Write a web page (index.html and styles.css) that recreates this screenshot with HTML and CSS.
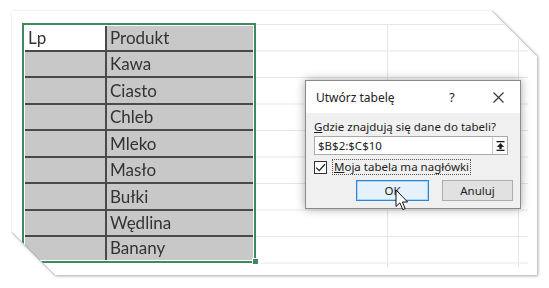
FILE: index.html
```html
<!DOCTYPE html>
<html lang="pl">
<head>
<meta charset="utf-8">
<title>Utwórz tabelę</title>
<link rel="stylesheet" href="styles.css">
</head>
<body>
<div class="page">
  <div class="sheet">
    <div class="paper">
      <div class="ws">
        <div class="tbl">
          <div class="rows">
            <div class="c lp">Lp</div><div class="c">Produkt</div>
            <div class="c"></div><div class="c">Kawa</div>
            <div class="c"></div><div class="c">Ciasto</div>
            <div class="c"></div><div class="c">Chleb</div>
            <div class="c"></div><div class="c">Mleko</div>
            <div class="c"></div><div class="c">Masło</div>
            <div class="c"></div><div class="c">Bułki</div>
            <div class="c"></div><div class="c">Wędlina</div>
            <div class="c"></div><div class="c">Banany</div>
          </div>
          <span class="handle"></span>
        </div>
        <div class="grid">
          <div class="gcol"></div>
          <div class="gcol"></div>
        </div>
      </div>
    </div>
  </div>

  <div class="dlg">
    <div class="titlebar">
      <span class="title">Utwórz tabelę</span>
      <span class="help">?</span>
      <span class="close"><svg width="11" height="11" viewBox="0 0 11 11"><path d="M0.5 0.5L10.5 10.5M10.5 0.5L0.5 10.5" stroke="#333" stroke-width="1.1" fill="none"/></svg></span>
    </div>
    <div class="body">
      <div class="label"><u>G</u>dzie znajdują się dane do tabeli?</div>
      <div class="input">
        <span class="val">$B$2:$C$10</span>
        <span class="collapse"><svg width="9" height="10" viewBox="0 0 9 10"><rect x="0.5" y="0" width="8" height="1.3" fill="#222"/><path d="M4.5 2L0.8 6H3.3V8H5.7V6H8.2Z" fill="#222"/><rect x="0.5" y="8.7" width="8" height="1.3" fill="#222"/></svg></span>
      </div>
      <div class="chkrow">
        <span class="box"><svg width="11" height="11" viewBox="0 0 11 11"><path d="M1.2 5.6L4.2 8.6L10 2.2" stroke="#222" stroke-width="1.3" fill="none"/></svg></span>
        <span class="chklabel"><u>M</u>oja tabela ma nagłówki</span>
      </div>
      <div class="btns">
        <span class="btn ok">OK</span>
        <span class="btn">Anuluj</span>
      </div>
    </div>
  </div>

  <svg class="cursor" width="14" height="22" viewBox="0 0 14 22"><path d="M1 1V17.5L4.9 13.8L7.8 20.6L10.2 19.6L7.4 13H12.6Z" fill="#fff" stroke="#111" stroke-width="1" stroke-linejoin="round"/></svg>
</div>
</body>
</html>
```

FILE: styles.css
```css
html, body {
  margin: 0;
  padding: 0;
  background: #fff;
}

.page {
  position: relative;
  width: 549px;
  height: 288px;
  padding: 11px 0 0 12px;
  box-sizing: border-box;
  overflow: hidden;
}

.sheet {
  width: 525px;
  height: 264px;
  filter: drop-shadow(0 0 0.6px #6f6f6f) drop-shadow(1px 1.5px 1.5px rgba(0, 0, 0, 0.35));
}

.paper {
  width: 525px;
  height: 264px;
  background: #fff;
  clip-path: polygon(0 0, 480px 0, 525px 45px, 525px 264px, 43px 264px, 0 221px);
  padding: 12px 0 0 10px;
  box-sizing: border-box;
}

.ws {
  display: flex;
  align-items: flex-start;
}

.tbl {
  position: relative;
  border: 2px solid #3e8a5c;
  padding: 1px;
  background: #fff;
}

.rows {
  display: grid;
  grid-template-columns: 80px 146px;
  grid-template-rows: 23.5px repeat(7, 24.5px) 22.5px;
  gap: 2px;
  background: #4a4a4a;
}

.c {
  background: #c8c8c8;
  font-family: Lato, "Open Sans", sans-serif;
  font-size: 17px;
  color: #333;
  display: flex;
  align-items: flex-end;
  padding: 0 0 2px 3px;
  line-height: 20px;
}

.c.lp {
  background: #fff;
}

.handle {
  position: absolute;
  right: -4.5px;
  bottom: -4.5px;
  width: 5px;
  height: 5px;
  background: #3e8a5c;
  border: 1px solid #fff;
}

.grid {
  display: flex;
  width: 272px;
  height: 243px;
  margin-top: 1px;
  background-image: linear-gradient(#e6e6e6 1px, transparent 1px);
  background-size: 100% 26.5px;
}

.gcol {
  height: 100%;
  border-right: 1px solid #e6e6e6;
}

.gcol:first-child {
  width: 131px;
}

.gcol:last-child {
  width: 130px;
}

/* dialog */
.dlg {
  position: absolute;
  left: 305px;
  top: 80px;
  width: 214px;
  height: 127px;
  border: 1px solid #8a8a8a;
  background: #f0f0f0;
  box-shadow: 0 0 9px rgba(0, 0, 0, 0.35);
  font-family: "Noto Sans", "Open Sans", sans-serif;
  font-size: 11.5px;
  color: #222;
  display: flex;
  flex-direction: column;
}

.titlebar {
  height: 32px;
  background: #fff;
  display: flex;
  align-items: center;
  padding-left: 10px;
}

.title {
  flex: 1;
  font-size: 12px;
}

.help {
  width: 12px;
  text-align: center;
  margin-right: 25px;
  font-size: 12.5px;
}

.close {
  width: 30px;
  margin-right: 7px;
  display: flex;
  justify-content: center;
}

.body {
  padding: 6px 12px 0 8px;
  display: flex;
  flex-direction: column;
}

.label {
  line-height: 16px;
  height: 16px;
}

.input {
  margin-top: 1px;
  height: 17px;
  border: 1px solid #a9a9a9;
  background: #fff;
  display: flex;
  align-items: center;
}

.val {
  flex: 1;
  padding-left: 3px;
  line-height: 17px;
}

.collapse {
  width: 14px;
  height: 17px;
  border-left: 1px solid #c9c9c9;
  display: flex;
  align-items: center;
  justify-content: center;
  background: #fbfbfb;
}

.chkrow {
  margin-top: 4px;
  height: 16px;
  display: flex;
  align-items: center;
}

.box {
  width: 13px;
  height: 13px;
  box-sizing: border-box;
  border: 1px solid #333;
  background: #fff;
  display: flex;
  align-items: center;
  justify-content: center;
}

.chklabel {
  margin-left: 5px;
  border: 1px dotted #555;
  padding: 0 1px;
  line-height: 14px;
}

.btns {
  margin-top: 5px;
  margin-right: -5px;
  display: flex;
  justify-content: flex-end;
  gap: 13px;
}

.btn {
  width: 71px;
  height: 21px;
  box-sizing: border-box;
  border: 1px solid #adadad;
  background: #e1e1e1;
  display: flex;
  align-items: center;
  justify-content: center;
}

.btn.ok {
  width: 73px;
  background: #e5f1fb;
  border-color: #2a86d6;
  box-shadow: inset 0 0 0 1px rgba(0, 120, 215, 0.25);
}

.cursor {
  position: absolute;
  left: 395px;
  top: 189px;
}
```
